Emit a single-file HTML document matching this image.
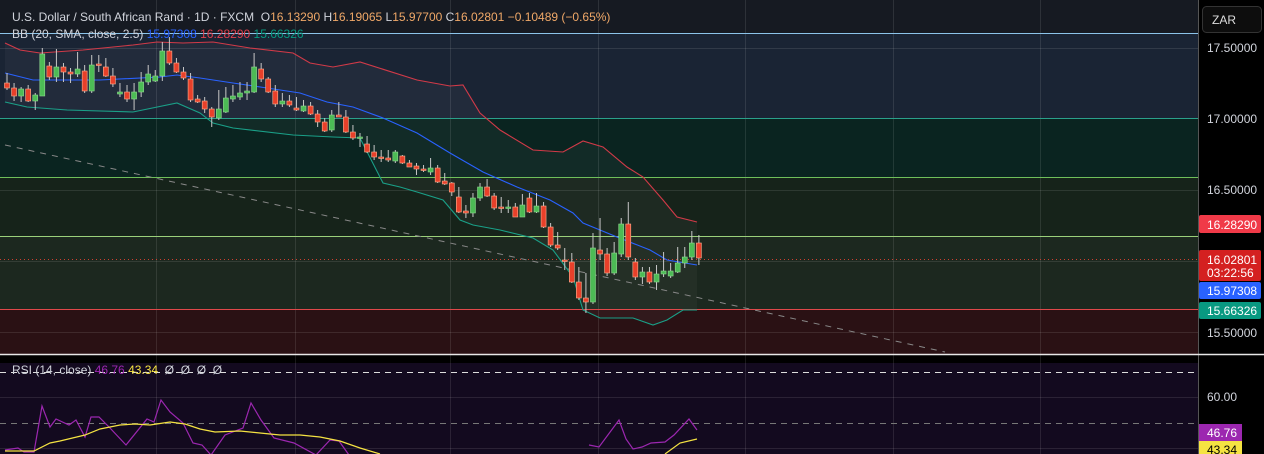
<!DOCTYPE html>
<html><head><meta charset="utf-8"><style>
html,body{margin:0;padding:0;background:#000;width:1264px;height:454px;overflow:hidden;font-family:"Liberation Sans",sans-serif}
svg{position:absolute;left:0;top:0}
.t{font-family:"Liberation Sans",sans-serif;font-size:12px;white-space:pre}
</style></head><body>
<svg id="s" width="1264" height="454" xmlns="http://www.w3.org/2000/svg">
<rect x="0" y="0" width="1198" height="33" fill="#161a22"/>
<rect x="0" y="33" width="1198" height="85" fill="#1a2434"/>
<rect x="0" y="118" width="1198" height="59" fill="#0a2420"/>
<rect x="0" y="177" width="1198" height="59" fill="#16231a"/>
<rect x="0" y="236" width="1198" height="73" fill="#1c281f"/>
<rect x="0" y="309" width="1198" height="45" fill="#2a1114"/>
<rect x="0" y="355" width="1198" height="8" fill="#000"/>
<rect x="0" y="363" width="1198" height="91" fill="#130a1f"/>
<polygon id="bbfill" fill="#ffffff" fill-opacity="0.035" points=""/>
<g stroke="#ffffff" stroke-opacity="0.1" stroke-width="1">
<line x1="156.5" y1="0" x2="156.5" y2="454"/><line x1="295.5" y1="0" x2="295.5" y2="454"/>
<line x1="450.5" y1="0" x2="450.5" y2="454"/><line x1="598.5" y1="0" x2="598.5" y2="454"/>
<line x1="745.5" y1="0" x2="745.5" y2="454"/><line x1="893.5" y1="0" x2="893.5" y2="454"/>
<line x1="1040.5" y1="0" x2="1040.5" y2="454"/>
<line x1="0" y1="48.5" x2="1198" y2="48.5"/><line x1="0" y1="190.5" x2="1198" y2="190.5"/>
<line x1="0" y1="261.5" x2="1198" y2="261.5"/><line x1="0" y1="332.5" x2="1198" y2="332.5"/>
<line x1="0" y1="397.5" x2="1198" y2="397.5"/><line x1="0" y1="448.5" x2="1198" y2="448.5"/>
</g>
<line x1="0" y1="423.5" x2="1198" y2="423.5" stroke="#777" stroke-dasharray="6,5"/>
<line x1="0" y1="372.5" x2="1198" y2="372.5" stroke="#ddd" stroke-dasharray="6,5"/>
<line x1="0" y1="33.5" x2="1198" y2="33.5" stroke="#8cc4ea"/>
<line x1="0" y1="118.5" x2="1198" y2="118.5" stroke="#2aa08a"/>
<line x1="0" y1="177.5" x2="1198" y2="177.5" stroke="#6fbf5a"/>
<line x1="0" y1="236.5" x2="1198" y2="236.5" stroke="#9ad07a"/>
<line x1="0" y1="309.5" x2="1198" y2="309.5" stroke="#e0484a"/>
<line x1="0" y1="259.5" x2="1198" y2="259.5" stroke="#d04030" stroke-dasharray="1,3"/>
<line x1="0" y1="354.5" x2="1198" y2="354.5" stroke="#e8e8e8" stroke-width="1.5"/>
<line x1="5" y1="145" x2="945" y2="352" stroke="#888" stroke-dasharray="6,6"/>
<g id="bb" fill="none" stroke-width="1.1"></g>
<g id="cd"></g>
<g id="rsi" fill="none" stroke-width="1.2"></g>
<rect x="1198" y="0" width="66" height="454" fill="#000"/>
<line x1="1198.5" y1="0" x2="1198.5" y2="454" stroke="#555"/>
<line x1="1198" y1="354.5" x2="1264" y2="354.5" stroke="#e8e8e8" stroke-width="1.5"/>
<rect x="1202.5" y="6.5" width="59" height="26" rx="4" fill="#0d0d0d" stroke="#333"/>
<text class="t" x="1212" y="24" fill="#ddd">ZAR</text>
<g class="t" fill="#d1d4dc">
<text x="1207" y="52">17.50000</text><text x="1207" y="123">17.00000</text>
<text x="1207" y="194">16.50000</text><text x="1207" y="337">15.50000</text>
<text x="1207" y="401">60.00</text>
</g>
<rect x="1199" y="215" width="62" height="18" rx="2" fill="#f03a48"/>
<text class="t" x="1207" y="229" fill="#fff">16.28290</text>
<rect x="1199" y="250" width="62" height="31" rx="2" fill="#d42020"/>
<text class="t" x="1207" y="264" fill="#fff">16.02801</text>
<text class="t" x="1207" y="277" fill="#fff">03:22:56</text>
<rect x="1199" y="282" width="62" height="17" rx="2" fill="#2962ff"/>
<text class="t" x="1207" y="295" fill="#fff">15.97308</text>
<rect x="1199" y="302" width="62" height="17" rx="2" fill="#089981"/>
<text class="t" x="1207" y="315" fill="#fff">15.66326</text>
<rect x="1199" y="424" width="43" height="17" fill="#9c27b0"/>
<text class="t" x="1207" y="437" fill="#fff">46.76</text>
<rect x="1199" y="441" width="43" height="13" fill="#f5e342"/>
<text class="t" x="1207" y="454" fill="#000">43.34</text>
<text class="t" x="12" y="21" fill="#d1d4dc">U.S. Dollar / South African Rand · 1D · FXCM  O<tspan fill="#f0a868">16.13290</tspan> H<tspan fill="#f0a868">16.19065</tspan> L<tspan fill="#f0a868">15.97700</tspan> C<tspan fill="#f0a868">16.02801 −0.10489 (−0.65%)</tspan></text>
<text class="t" x="12" y="38" fill="#d1d4dc">BB (20, SMA, close, 2.5) <tspan fill="#2962ff">15.97308</tspan> <tspan fill="#e0404e">16.28290</tspan> <tspan fill="#089981">15.66326</tspan></text>
<text class="t" x="12" y="374" fill="#d1d4dc">RSI (14, close) <tspan fill="#9c27b0">46.76</tspan> <tspan fill="#f5e342">43.34</tspan>  Ø  Ø  Ø  Ø</text>
</svg>
<script>
var NS="http://www.w3.org/2000/svg";
function pl(g,pts,col){var p=document.createElementNS(NS,"polyline");p.setAttribute("points",pts);p.setAttribute("stroke",col);document.getElementById(g).appendChild(p);}
var UP="5,43 20,50 40,53 83,50 133,45 157,42 183,43 213,42 250,48 293,53 310,63 333,67 360,62 417,80 450,86 463,85 480,113 500,130 533,150 563,152 583,141 603,147 627,167 643,177 663,200 677,217 697,222";
var LO="5,102 27,107 67,110 133,112 177,103 200,113 213,123 233,128 293,135 333,137 360,138 383,183 400,187 417,192 443,200 460,220 473,225 500,230 533,238 553,250 573,277 583,310 600,318 633,318 653,325 667,320 683,310 697,310";
document.getElementById("bbfill").setAttribute("points",UP+" "+LO.split(" ").reverse().join(" "));
pl("bb",UP,"#d23a48");
pl("bb","5,73 33,80 100,80 160,77 177,75 200,78 233,83 267,88 300,93 327,102 353,107 383,118 417,133 450,153 483,172 517,187 550,200 573,213 583,223 617,237 650,250 667,260 697,265","#2962ff");
pl("bb",LO,"#1aa088");
pl("rsi","5,450 18,448 24,452 34,452 42,406 50,427 56,419 69,425 76,420 85,437 91,417 99,417 110,428 126,445 147,419 154,422 161,400 170,412 183,423 193,443 202,445 211,455","#9c27b0");
pl("rsi","211,455 225,435 243,428 251,403 261,420 274,438 294,443 316,455 330,440 339,441 349,455","#9c27b0");
pl("rsi","589,445 599,447 619,420 626,439 633,449 642,447 651,443 665,442 674,435 689,419 697,430","#9c27b0");
pl("rsi","5,451 34,451 50,443 60,441 85,435 100,429 120,425 135,424 150,425 170,422 185,424 200,429 215,432 240,431 260,433 280,435 300,435 320,437 340,441 360,448 380,454","#f5e342");
pl("rsi","665,454 680,443 697,439","#f5e342");
var C=[
[83,88,'r',73,90],[88,96,'r',83,101],[89,96,'g',87,102],[89,101,'r',85,102],[95,101,'g',93,110],[54,96,'g',48,96],[66,77,'r',62,80],[67,77,'g',49,82],[67,72,'r',63,82],[72,74,'r',68,83],[69,74,'g',52,77],[71,91,'r',65,93],[65,91,'g',55,93],[64,65,'r',55,72],[67,76,'r',58,77],[76,84,'r',68,87],[92,94,'g',83,97],[92,99,'r',85,102],[92,99,'g',83,110],[82,92,'g',72,97],[74,82,'g',65,85],[76,81,'g',70,82],[51,76,'g',42,81],[51,63,'r',37,65],[63,72,'r',58,73],[72,78,'r',67,80],[79,100,'r',73,102],[99,102,'r',95,103],[101,109,'r',97,113],[109,117,'r',107,127],[109,118,'g',90,120],[98,112,'g',87,113],[96,99,'g',85,102],[93,97,'g',82,100],[91,93,'g',82,100],[67,92,'g',53,93],[69,79,'r',63,82],[79,92,'r',77,93],[91,104,'r',85,107],[101,104,'g',93,107],[101,105,'r',95,107],[108,110,'r',97,111],[106,111,'g',100,112],[106,114,'r',102,115],[114,122,'r',110,127],[122,131,'r',118,132],[115,130,'g',110,132],[115,117,'r',102,117],[117,132,'r',110,133],[132,138,'r',125,140],
[137,138,'g',133,147],[144,152,'r',136,153],[152,157,'r',145,160],[157,158,'r',150,162],[158,160,'r',150,162],[152,161,'g',150,163],[156,163,'r',155,164],[163,167,'r',160,167],[166,169,'r',163,175],[169,170,'r',165,172],[168,172,'g',158,175],[168,182,'r',165,183],[181,184,'r',173,185],[183,192,'r',182,196],[197,212,'r',187,213],[211,213,'r',205,218],[198,213,'g',193,217],[187,198,'g',183,201],[187,196,'r',179,197],[196,208,'r',193,210],[207,208,'r',197,213],[207,208,'g',200,213],[207,217,'r',203,217],[205,217,'g',194,217],[198,212,'r',193,213],[206,212,'g',193,213],[206,227,'r',202,228],[227,245,'r',223,247],[245,248,'r',232,250],[260,261,'r',248,270],[262,282,'r',253,283],[282,298,'r',267,300],[298,302,'r',273,313],[248,302,'g',233,304],[250,254,'r',218,260],[254,273,'r',248,276],[253,273,'g',242,275],[224,254,'g',218,257],[224,257,'r',202,260],[262,277,'r',258,280],[272,277,'g',267,284],[272,282,'r',267,284],[274,282,'g',265,290],[271,274,'g',252,277],[271,276,'g',263,278],[263,272,'g',247,273],[257,263,'g',247,268],[243,257,'g',231,260],[243,258,'r',235,265]];
var g=document.getElementById("cd"),h="";
for(var i=0;i<C.length;i++){var c=C[i],x=7+i*7.06,col=c[2]=='g'?'#4cbb55':'#e8402a',st=c[2]=='g'?'#8fd88f':'#ffb090';
h+='<line x1="'+x+'" y1="'+c[3]+'" x2="'+x+'" y2="'+c[4]+'" stroke="#c8c8c8" stroke-width="1"/>';
var hh=Math.max(1.5,c[1]-c[0]);h+='<rect x="'+(x-2.5)+'" y="'+c[0]+'" width="5" height="'+hh+'" fill="'+col+'" stroke="'+st+'" stroke-width="0.6"/>';}
g.innerHTML=h;
</script>
</body></html>
